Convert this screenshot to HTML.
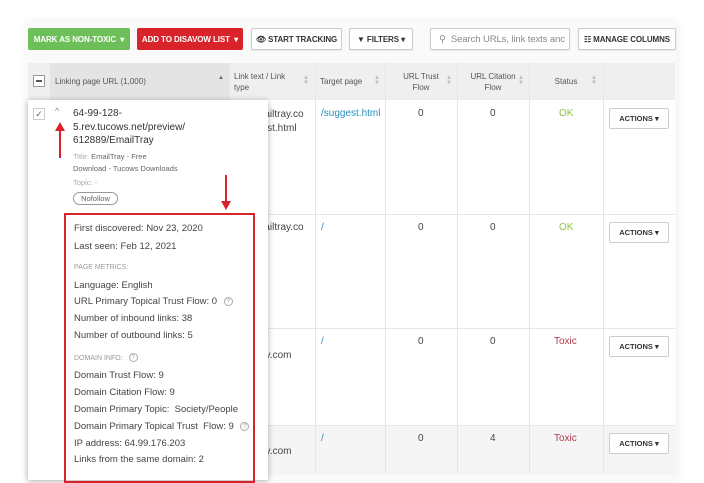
<!DOCTYPE html>
<html><head><meta charset="utf-8"><style>
*{box-sizing:border-box;margin:0;padding:0}
body{width:704px;height:471px;overflow:hidden;background:#fff;font-family:"Liberation Sans",sans-serif;position:relative;color:#333}
.a{position:absolute}
.panel{left:24px;top:20px;width:652px;height:460px;background:#fafafa;box-shadow:2px 0 6px rgba(0,0,0,.06)}
.btn{position:absolute;top:28px;height:22px;border-radius:2px;font-size:8px;font-weight:bold;display:flex;align-items:center;justify-content:center;letter-spacing:-.1px}
.wb{background:#fff;border:1px solid #ccc;color:#333;box-shadow:0 1px 1px rgba(0,0,0,.08)}
.hdr{left:28px;top:63px;width:647px;height:37px;background:#efefef}
.th{position:absolute;font-size:8px;color:#555;top:63px;height:37px;display:flex;align-items:center}
.vl{position:absolute;width:1px;background:#e6e6e6}
.hl{position:absolute;height:1px;background:#e6e6e6;left:28px;width:647px}
.cell{position:absolute;font-size:10px;color:#444}
.act{position:absolute;left:609px;width:60px;height:21px;border:1px solid #ccc;background:#fff;border-radius:2px;font-size:7.5px;font-weight:bold;display:flex;align-items:center;justify-content:center;color:#333}
.sort{position:absolute;font-size:6px;color:#bbb;line-height:5px}
.pop{left:28px;top:100px;width:240px;height:380px;background:#fff;box-shadow:0 1px 6px rgba(0,0,0,.3)}
.p{position:absolute;left:74px;font-size:9.5px;color:#444;white-space:nowrap}
.sm{font-size:7px;color:#999}
.q{display:inline-block;width:9px;height:9px;border:1px solid #aaa;border-radius:50%;font-size:6.5px;text-align:center;line-height:8px;color:#999;vertical-align:1px;margin-left:4px}
</style></head><body>
<div class="a panel"></div>
<div class="btn" style="left:28px;width:102px;background:#6dbf5a;color:#fff">MARK AS NON-TOXIC &nbsp;▾</div>
<div class="btn" style="left:137px;width:106px;background:#d9232a;color:#fff">ADD TO DISAVOW LIST &nbsp;▾</div>
<div class="btn wb" style="left:251px;width:91px">👁&#xFE0E; START TRACKING</div>
<div class="btn wb" style="left:349px;width:64px">▼ FILTERS ▾</div>
<div class="btn wb" style="left:430px;width:140px;justify-content:flex-start;padding-left:8px;font-weight:normal;font-size:9.5px;color:#888">⚲&nbsp; Search URLs, link texts anc</div>
<div class="btn wb" style="left:578px;width:98px">☷ MANAGE COLUMNS</div>
<div class="a hdr"></div>
<div class="a" style="left:50px;top:63px;width:179px;height:37px;background:#e4e4e4"></div>
<div class="a" style="left:33px;top:75px;width:12px;height:12px;border:1px solid #999;background:#fff"><div class="a" style="left:2px;top:4px;width:6px;height:2px;background:#555"></div></div>
<div class="th" style="left:55px">Linking page URL (1,000)</div>
<div class="sort" style="left:218px;top:76px;color:#666">▲</div>
<div class="th" style="left:234px;line-height:11px">Link text / Link<br>type</div>
<div class="th" style="left:320px">Target page</div>
<div class="th" style="left:385px;width:72px;justify-content:center;text-align:center;line-height:11px">URL Trust<br>Flow</div>
<div class="th" style="left:457px;width:72px;justify-content:center;text-align:center;line-height:11px">URL Citation<br>Flow</div>
<div class="th" style="left:529px;width:74px;justify-content:center">Status</div>
<div class="sort" style="left:303px;top:76px">▲<br>▼</div><div class="sort" style="left:374px;top:76px">▲<br>▼</div><div class="sort" style="left:446px;top:76px">▲<br>▼</div><div class="sort" style="left:518px;top:76px">▲<br>▼</div><div class="sort" style="left:591px;top:76px">▲<br>▼</div>
<div class="a" style="left:28px;top:100px;width:647px;height:325px;background:#fff"></div>
<div class="a" style="left:28px;top:425px;width:647px;height:50px;background:#f5f5f5"></div>
<div class="hl" style="top:214px"></div><div class="hl" style="top:328px"></div><div class="hl" style="top:425px"></div>
<div class="vl" style="left:229px;top:63px;height:410px"></div><div class="vl" style="left:315px;top:63px;height:410px"></div><div class="vl" style="left:385px;top:63px;height:410px"></div><div class="vl" style="left:457px;top:63px;height:410px"></div><div class="vl" style="left:529px;top:63px;height:410px"></div><div class="vl" style="left:603px;top:63px;height:410px"></div>
<div class="cell" style="left:256px;top:108px;line-height:14px">mailtray.co<br>gest.html</div>
<div class="cell" style="left:321px;top:108px;color:#2a8fbd">/suggest.html</div>
<div class="cell" style="left:256px;top:222px">mailtray.co</div>
<div class="cell" style="left:321px;top:222px;color:#2a8fbd">/</div>
<div class="cell" style="left:260px;top:350px">ay.com</div>
<div class="cell" style="left:321px;top:336px;color:#2a8fbd">/</div>
<div class="cell" style="left:260px;top:446px">ay.com</div>
<div class="cell" style="left:321px;top:433px;color:#2a8fbd">/</div>
<div class="cell" style="left:418px;top:108px">0</div><div class="cell" style="left:490px;top:108px">0</div><div class="cell" style="left:559px;top:108px;color:#8bc34a">OK</div>
<div class="cell" style="left:418px;top:222px">0</div><div class="cell" style="left:490px;top:222px">0</div><div class="cell" style="left:559px;top:222px;color:#8bc34a">OK</div>
<div class="cell" style="left:418px;top:336px">0</div><div class="cell" style="left:490px;top:336px">0</div><div class="cell" style="left:554px;top:336px;color:#b03a4a">Toxic</div>
<div class="cell" style="left:418px;top:433px">0</div><div class="cell" style="left:490px;top:433px">4</div><div class="cell" style="left:554px;top:433px;color:#b03a4a">Toxic</div>
<div class="act" style="top:108px">ACTIONS ▾</div><div class="act" style="top:222px">ACTIONS ▾</div><div class="act" style="top:336px">ACTIONS ▾</div><div class="act" style="top:433px">ACTIONS ▾</div>
<div class="a pop"></div>
<div class="a" style="left:33px;top:108px;width:12px;height:12px;border:1px solid #ccc;font-size:9px;line-height:10px;text-align:center;color:#666">✓</div>
<div class="a" style="left:55px;top:106px;font-size:9px;color:#888">^</div>
<div class="a" style="left:73px;top:107px;font-size:10px;line-height:13.5px;color:#333">64-99-128-<br>5.rev.tucows.net/preview/<br>612889/EmailTray</div>
<div class="a" style="left:73px;top:151px;font-size:7.5px;line-height:11.5px;color:#666"><span style="color:#aaa">Title:</span> EmailTray - Free<br>Download - Tucows Downloads</div>
<div class="a" style="left:73px;top:178px;font-size:7.5px;color:#aaa">Topic: -</div>
<div class="a" style="left:73px;top:192px;width:45px;height:13px;border:1px solid #999;border-radius:7px;font-size:7.5px;color:#666;text-align:center;line-height:11px">Nofollow</div>
<div class="a" style="left:59px;top:128px;width:2px;height:30px;background:#d9232a"></div>
<div class="a" style="left:55px;top:122px;width:0;height:0;border-left:5px solid transparent;border-right:5px solid transparent;border-bottom:9px solid #d9232a"></div>
<div class="a" style="left:225px;top:175px;width:2px;height:28px;background:#d9232a"></div>
<div class="a" style="left:221px;top:201px;width:0;height:0;border-left:5px solid transparent;border-right:5px solid transparent;border-top:9px solid #d9232a"></div>
<div class="a" style="left:64px;top:213px;width:191px;height:270px;border:2px solid #d9232a"></div>
<div class="p" style="top:223px">First discovered: Nov 23, 2020</div>
<div class="p" style="top:241px">Last seen: Feb 12, 2021</div>
<div class="p sm" style="top:264px">PAGE METRICS:</div>
<div class="p" style="top:280px">Language: English</div>
<div class="p" style="top:296px">URL Primary Topical Trust Flow: 0 <span class="q">?</span></div>
<div class="p" style="top:313px">Number of inbound links: 38</div>
<div class="p" style="top:330px">Number of outbound links: 5</div>
<div class="p sm" style="top:353px">DOMAIN INFO: <span class="q">?</span></div>
<div class="p" style="top:370px">Domain Trust Flow: 9</div>
<div class="p" style="top:387px">Domain Citation Flow: 9</div>
<div class="p" style="top:404px">Domain Primary Topic:&nbsp; Society/People</div>
<div class="p" style="top:421px">Domain Primary Topical Trust&nbsp; Flow: 9 <span class="q">?</span></div>
<div class="p" style="top:438px">IP address: 64.99.176.203</div>
<div class="p" style="top:454px">Links from the same domain: 2</div>
</body></html>
